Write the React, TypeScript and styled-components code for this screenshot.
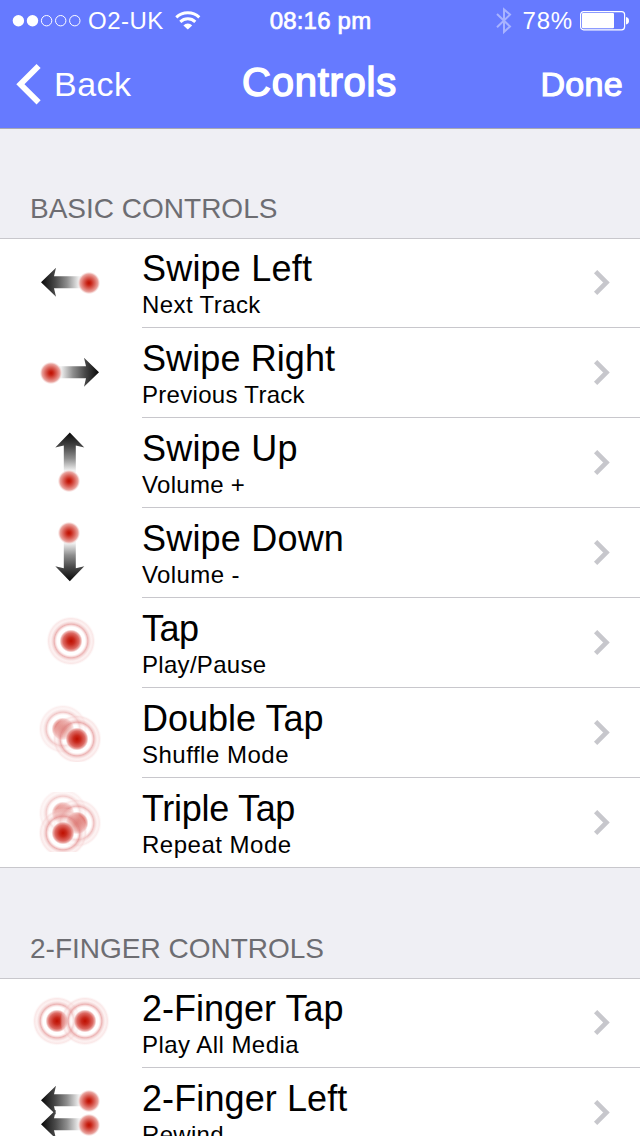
import React from "react";
import styled, { createGlobalStyle } from "styled-components";

const GlobalStyle = createGlobalStyle`
  body {
    margin: 0;
    background: #efeff4;
    overflow: hidden;
    font-family: "Liberation Sans", Arial, sans-serif;
  }
`;

const Screen = styled.main`
  width: 640px;
  height: 1136px;
  overflow: hidden;
  background: #efeff4;
  color: #000;
`;

const TopArea = styled.header`
  height: 128px;
  background: #667aff;
  color: #fff;
`;

const StatusBar = styled.div`
  display: grid;
  grid-template-columns: 1fr auto 1fr;
  height: 40px;
  align-items: center;
  box-sizing: border-box;
  padding: 1px 11px 0 12px;
  font-size: 24px;
  line-height: 28px;
  white-space: nowrap;
`;

const StatusGroup = styled.div<{ $end?: boolean }>`
  display: flex;
  align-items: center;
  justify-content: ${(p) => (p.$end ? "flex-end" : "flex-start")};

  svg {
    flex: none;
  }
`;

const Carrier = styled.span`
  margin: 0 11px 0 7px;
  letter-spacing: 0.5px;
`;

const Clock = styled.span`
  -webkit-text-stroke: 0.7px #fff;
  letter-spacing: 0.2px;
`;

const Percent = styled.span`
  margin: 0 7px 0 11px;
  letter-spacing: 0.8px;
`;

const NavBar = styled.nav`
  display: grid;
  grid-template-columns: 1fr auto 1fr;
  align-items: center;
  height: 88px;
  box-sizing: border-box;
  padding: 0 17px 1px 16px;
  line-height: 46px;
`;

const BackButton = styled.a`
  display: flex;
  align-items: center;
  font-size: 34px;
  letter-spacing: 0.5px;

  svg {
    margin-right: 13px;
  }
`;

const NavTitle = styled.h1`
  margin: 0 0 4px;
  font-size: 40px;
  font-weight: 400;
  letter-spacing: 0.75px;
  -webkit-text-stroke: 1.5px #fff;
`;

const DoneButton = styled.a`
  justify-self: end;
  font-size: 34px;
  letter-spacing: 0.3px;
  -webkit-text-stroke: 1.2px #fff;
`;

const SectionHeader = styled.h2<{ $first?: boolean }>`
  display: flex;
  align-items: flex-end;
  height: 110px;
  box-sizing: border-box;
  margin: 0;
  padding: 0 30px 13px;
  border-top: ${(p) => (p.$first ? "1px solid #a9a9b4" : "0")};
  color: #6d6d72;
  font-size: 28px;
  font-weight: 400;
  line-height: 32px;
`;

const List = styled.ul`
  margin: 0;
  padding: 0;
  list-style: none;
  background: #fff;
`;

const Row = styled.li`
  display: flex;
  height: 90px;
  box-sizing: border-box;

  &:first-child {
    box-shadow: inset 0 1px #c8c7cc;
  }

  &:last-child {
    box-shadow: inset 0 -1px #c8c7cc;
  }
`;

const RowBody = styled.div`
  display: flex;
  flex: 1;
  align-items: center;
  justify-content: space-between;
  padding: 0 29px 1px 0;
  box-shadow: inset 0 -1px #c8c7cc;
`;

const Labels = styled.div`
  display: flex;
  flex-direction: column;
  align-self: flex-start;
  padding-top: 10px;
  white-space: nowrap;
`;

const RowTitle = styled.span<{ $spacing?: number }>`
  font-size: 36px;
  line-height: 42px;
  letter-spacing: ${(p) => p.$spacing ?? 0.2}px;
`;

const RowDetail = styled.span<{ $spacing?: number }>`
  margin-top: 1px;
  font-size: 24px;
  line-height: 28px;
  letter-spacing: ${(p) => p.$spacing ?? 0.3}px;
`;

const Figure = styled.svg`
  flex: none;
  width: 142px;
  height: 90px;
`;

const Dot = ({ x, y }: { x: number; y: number }) => (
  <circle cx={x} cy={y} r="11.3" fill="url(#dot)" />
);

const Touch = ({ x, y, fade = 1 }: { x: number; y: number; fade?: number }) => (
  <circle cx={x} cy={y} r="25" fill="url(#touch)" opacity={fade} />
);

/* Arrow pointing left from its tip; rotated for the other directions. */
const Arrow = ({ x, y, turn = 0 }: { x: number; y: number; turn?: number }) => (
  <path
    transform={`translate(${x} ${y}) rotate(${turn})`}
    d="M0 0 L15 -14.5 L13 -6 H40 V6 H13 L15 14.5 Z"
    fill="url(#shaft)"
  />
);

const figures: Record<string, React.ReactNode> = {
  left: (
    <>
      <Arrow x={41} y={44.3} />
      <Dot x={89} y={45} />
    </>
  ),
  right: (
    <>
      <Arrow x={99} y={44.3} turn={180} />
      <Dot x={51} y={45} />
    </>
  ),
  up: (
    <>
      <Arrow x={69.8} y={14.5} turn={90} />
      <Dot x={69} y={63} />
    </>
  ),
  down: (
    <>
      <Arrow x={69.8} y={73.2} turn={-90} />
      <Dot x={69} y={25} />
    </>
  ),
  tap: <Touch x={71} y={43} />,
  double: (
    <g clipPath="url(#cell)">
      <Touch x={63} y={41} fade={0.75} />
      <Touch x={77} y={51} />
    </g>
  ),
  triple: (
    <g clipPath="url(#cell)">
      <Touch x={63} y={35} fade={0.65} />
      <Touch x={77} y={45} fade={0.85} />
      <Touch x={63} y={55} />
    </g>
  ),
  twoTap: (
    <>
      <Touch x={57} y={43} />
      <Touch x={85} y={43} />
    </>
  ),
  twoLeft: (
    <>
      <Arrow x={41} y={32.3} />
      <Arrow x={41} y={56.3} />
      <Dot x={89} y={33} />
      <Dot x={89} y={57} />
    </>
  ),
};

const Gradients = () => (
  <svg width="0" height="0" style={{ display: "block" }}>
    <defs>
      <radialGradient id="dot">
        <stop offset="0" stopColor="#be0f00" />
        <stop offset="0.2" stopColor="#c82619" />
        <stop offset="0.55" stopColor="#dc6c64" />
        <stop offset="0.8" stopColor="#e9a5a0" />
        <stop offset="1" stopColor="#f6d8d6" stopOpacity="0" />
      </radialGradient>
      <radialGradient id="touch">
        <stop offset="0" stopColor="#be0f00" />
        <stop offset="0.14" stopColor="#c82a1e" />
        <stop offset="0.32" stopColor="#dc6a64" />
        <stop offset="0.4" stopColor="#e9a09c" stopOpacity="0.85" />
        <stop offset="0.46" stopColor="#fff" stopOpacity="0.55" />
        <stop offset="0.56" stopColor="#fff" stopOpacity="0.45" />
        <stop offset="0.61" stopColor="#f4cccc" stopOpacity="0.5" />
        <stop offset="0.67" stopColor="#e59a9a" stopOpacity="0.75" />
        <stop offset="0.73" stopColor="#eebcbc" stopOpacity="0.6" />
        <stop offset="0.81" stopColor="#fae2e2" stopOpacity="0.45" />
        <stop offset="0.9" stopColor="#f4cccc" stopOpacity="0.45" />
        <stop offset="1" stopColor="#fff" stopOpacity="0" />
      </radialGradient>
      <linearGradient id="shaft" gradientUnits="userSpaceOnUse" x1="0" y1="0" x2="40" y2="0">
        <stop offset="0" stopColor="#080808" />
        <stop offset="0.35" stopColor="#484848" />
        <stop offset="0.65" stopColor="#8e8e8e" />
        <stop offset="0.95" stopColor="#f0f0f0" />
      </linearGradient>
      <clipPath id="cell">
        <rect x="39" y="14" width="62" height="60" />
      </clipPath>
    </defs>
  </svg>
);

const SignalDots = () => (
  <svg width="69" height="14" viewBox="0 0 69 14">
    {[0, 1, 2, 3, 4].map((i) => (
      <circle
        key={i}
        cx={6.4 + i * 14.1}
        cy="6.7"
        r={i < 2 ? 5.7 : 5.2}
        fill={i < 2 ? "#fff" : "none"}
        stroke={i < 2 ? "none" : "#fff"}
        strokeWidth="1"
      />
    ))}
  </svg>
);

const Wifi = () => (
  <svg width="26" height="20" viewBox="0 0 26 20" fill="none" stroke="#fff" strokeWidth="3">
    <path d="M1.3 6.4 A16.6 16.6 0 0 1 24.3 6.4" />
    <path d="M5.3 10.8 A10.8 10.8 0 0 1 20.3 10.8" />
    <path d="M12.8 18.6 L8.4 14.4 A6.1 6.1 0 0 1 17.2 14.4 Z" fill="#fff" stroke="none" />
  </svg>
);

const Bluetooth = () => (
  <svg width="16" height="28" viewBox="0 0 16 28" fill="none" stroke="#a8b3ff" strokeWidth="2">
    <path d="M1 7 L14 19.5 L8 25 V2.4 L14 7.6 L1 20.3" />
  </svg>
);

const Battery = () => (
  <svg width="49" height="20" viewBox="0 0 49 20">
    <rect x="0.6" y="0.6" width="44" height="18.2" rx="3" fill="none" stroke="#fff" strokeWidth="1.2" />
    <rect x="2" y="2" width="32" height="15.3" rx="1" fill="#fff" />
    <path d="M46 6 Q49 6.6 49 9.7 T46 13.4 Z" fill="#fff" />
  </svg>
);

const Chevron = () => (
  <svg width="18" height="28" viewBox="0 0 18 28" fill="none" stroke="#c7c7cc" strokeWidth="4.6">
    <path d="M2.6 2.6 L13.5 13.5 L2.6 24.4" />
  </svg>
);

type Item = { icon: string; title: string; detail: string; ts?: number; ds?: number };

const basic: Item[] = [
  { icon: "left", title: "Swipe Left", detail: "Next Track", ds: 0.4 },
  { icon: "right", title: "Swipe Right", detail: "Previous Track", ts: 0.1 },
  { icon: "up", title: "Swipe Up", detail: "Volume +" },
  { icon: "down", title: "Swipe Down", detail: "Volume -", ds: 0.4 },
  { icon: "tap", title: "Tap", detail: "Play/Pause", ts: -0.5 },
  { icon: "double", title: "Double Tap", detail: "Shuffle Mode", ts: 0, ds: 0.5 },
  { icon: "triple", title: "Triple Tap", detail: "Repeat Mode", ts: -0.3, ds: 0.5 },
];

const twoFinger: Item[] = [
  { icon: "twoTap", title: "2-Finger Tap", detail: "Play All Media", ts: 0, ds: 0.45 },
  { icon: "twoLeft", title: "2-Finger Left", detail: "Rewind", ts: 0.1 },
];

const ControlList = ({ items }: { items: Item[] }) => (
  <List>
    {items.map((item) => (
      <Row key={item.title}>
        <Figure viewBox="0 0 142 90">{figures[item.icon]}</Figure>
        <RowBody>
          <Labels>
            <RowTitle $spacing={item.ts}>{item.title}</RowTitle>
            <RowDetail $spacing={item.ds}>{item.detail}</RowDetail>
          </Labels>
          <Chevron />
        </RowBody>
      </Row>
    ))}
  </List>
);

export default function App() {
  return (
    <Screen>
      <GlobalStyle />
      <Gradients />
      <TopArea>
        <StatusBar>
          <StatusGroup>
            <SignalDots />
            <Carrier>O2-UK</Carrier>
            <Wifi />
          </StatusGroup>
          <Clock>08:16 pm</Clock>
          <StatusGroup $end>
            <Bluetooth />
            <Percent>78%</Percent>
            <Battery />
          </StatusGroup>
        </StatusBar>
        <NavBar>
          <BackButton>
            <svg width="25" height="42" viewBox="0 0 25 42" fill="none" stroke="#fff" strokeWidth="5.8">
              <path d="M22.6 3 L4.4 21.2 L22.6 39.4" />
            </svg>
            Back
          </BackButton>
          <NavTitle>Controls</NavTitle>
          <DoneButton>Done</DoneButton>
        </NavBar>
      </TopArea>
      <SectionHeader $first>BASIC CONTROLS</SectionHeader>
      <ControlList items={basic} />
      <SectionHeader>2-FINGER CONTROLS</SectionHeader>
      <ControlList items={twoFinger} />
    </Screen>
  );
}
